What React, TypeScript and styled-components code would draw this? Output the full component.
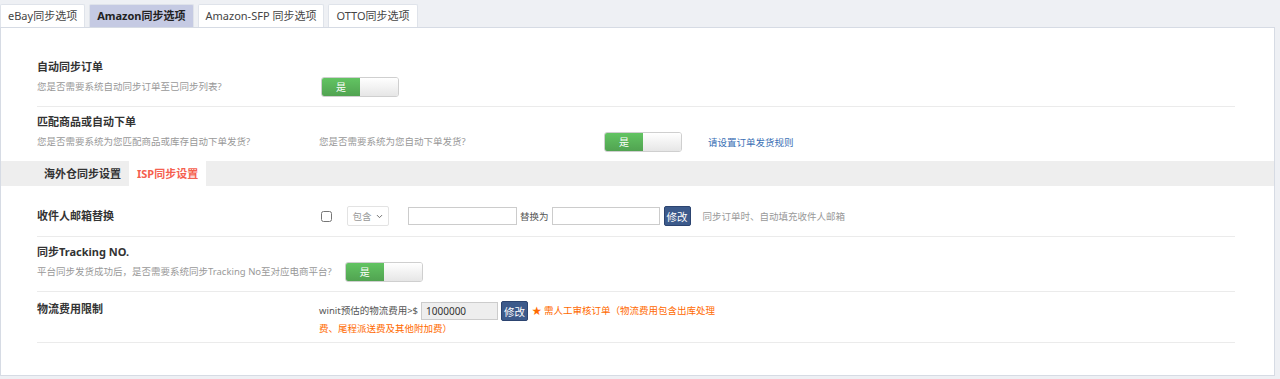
import styled, { createGlobalStyle } from "styled-components";
import { ChevronDown } from "lucide-react";

const GlobalStyle = createGlobalStyle`
  body {
    margin: 0;
    background: #eef0f4;
    font-family: "Noto Sans", "Noto Sans CJK SC", sans-serif;
    font-size: 9.5px;
    color: #333;
  }
`;

const Page = styled.div`
  height: 379px;
  padding-top: 4px;
  box-sizing: border-box;
`;

const TopTabs = styled.div`
  display: flex;
  gap: 4px;
`;

const TopTab = styled.div<{ $active?: boolean }>`
  height: 23px;
  box-sizing: border-box;
  padding: 0 7px;
  line-height: 22px;
  font-size: 11px;
  border: 1px solid #dfe3ea;
  border-bottom: none;
  border-radius: 2px 2px 0 0;
  background: ${(p) => (p.$active ? "#c5cae3" : "#fff")};
  color: ${(p) => (p.$active ? "#222" : "#444")};
  font-weight: ${(p) => (p.$active ? 700 : 400)};
`;

const Panel = styled.div`
  width: 1275px;
  height: 349px;
  box-sizing: border-box;
  background: #fff;
  border: 1px solid #d6dbe4;
  padding-top: 29px;
`;

const Section = styled.div`
  padding: 0 39px 0 36px;
`;

const Row = styled.div<{ $pt: number; $pb: number; $last?: boolean }>`
  padding: ${(p) => p.$pt}px 0 ${(p) => p.$pb}px;
  border-bottom: ${(p) => (p.$last ? "none" : "1px solid #ebebeb")};
`;

const Title = styled.div`
  font-size: 11px;
  font-weight: 700;
  line-height: 20px;
  color: #333;
`;

const Line = styled.div`
  display: flex;
  align-items: center;
  height: 20px;
`;

const Desc = styled.div<{ $w?: number }>`
  color: #999;
  line-height: 20px;
  white-space: nowrap;
  ${(p) => (p.$w ? `width: ${p.$w}px; flex: none;` : "")}
`;

const Switch = styled.div<{ $ml?: number }>`
  display: flex;
  width: 78px;
  height: 20px;
  box-sizing: border-box;
  border: 1px solid #cfcfcf;
  border-radius: 3px;
  overflow: hidden;
  margin-left: ${(p) => p.$ml ?? 0}px;
  flex: none;
`;

const SwitchOn = styled.div`
  width: 38px;
  background: linear-gradient(#62c462, #51a351);
  color: #fff;
  font-size: 10px;
  line-height: 18px;
  text-align: center;
`;

const SwitchOff = styled.div`
  flex: 1;
  background: linear-gradient(#fff, #e6e6e6);
`;

const Link = styled.a`
  margin-left: 26px;
  color: #3a70b5;
  text-decoration: none;
  white-space: nowrap;
`;

const Band = styled.div`
  display: flex;
  height: 25px;
  background: #eeeeee;
  padding-left: 35px;
`;

const SubTab = styled.div<{ $active?: boolean }>`
  padding: 0 8px;
  line-height: 25px;
  font-size: 11px;
  font-weight: 700;
  background: ${(p) => (p.$active ? "#fff" : "transparent")};
  color: ${(p) => (p.$active ? "#f5604f" : "#333")};
`;

const Grid = styled.div<{ $align?: string }>`
  display: grid;
  grid-template-columns: 282px auto;
  align-items: ${(p) => p.$align ?? "center"};
`;

const Label = styled.div<{ $lh: number }>`
  font-size: 11px;
  font-weight: 700;
  line-height: ${(p) => p.$lh}px;
`;

const Controls = styled.div`
  display: flex;
  align-items: center;
  height: 22px;
`;

const Check = styled.input`
  width: 11px;
  height: 11px;
  margin: 0 0 0 2px;
`;

const SelectBox = styled.div`
  margin-left: 15px;
  width: 42px;
  height: 20px;
  box-sizing: border-box;
  border: 1px solid #e3e3e3;
  border-radius: 2px;
  display: flex;
  align-items: center;
  justify-content: center;
  gap: 3px;
  color: #999;
  flex: none;
`;

const TextInput = styled.input<{ $w: number; $ml?: number; $grey?: boolean }>`
  width: ${(p) => p.$w}px;
  height: 18px;
  box-sizing: border-box;
  margin: 0 0 0 ${(p) => p.$ml ?? 0}px;
  padding: 0 4px;
  border: 1px solid #ccc;
  font-family: inherit;
  font-size: 10px;
  color: #333;
  background: ${(p) => (p.$grey ? "#eeeeee" : "#fff")};
  vertical-align: middle;
`;

const Plain = styled.span<{ $mx?: number }>`
  margin: 0 ${(p) => p.$mx ?? 0}px;
  color: #555;
  white-space: nowrap;
`;

const Button = styled.button<{ $ml?: number; $mr?: number }>`
  height: 20px;
  width: 27px;
  padding: 0;
  margin-left: ${(p) => p.$ml ?? 4}px;
  margin-right: ${(p) => p.$mr ?? 0}px;
  border: 1px solid #2c4470;
  border-radius: 2px;
  background: #3c5a8b;
  color: #fff;
  font-family: inherit;
  font-size: 10.5px;
  vertical-align: middle;
`;

const Hint = styled.span`
  margin-left: 12px;
  color: #999;
  white-space: nowrap;
`;

// orange warning text flows directly inside the block and wraps under the input
const CostBlock = styled.div`
  width: 400px;
  line-height: 16px;
  color: #ff6a00;
`;

export default function App() {
  return (
    <Page>
      <GlobalStyle />
      <TopTabs>
        <TopTab>eBay同步选项</TopTab>
        <TopTab $active>Amazon同步选项</TopTab>
        <TopTab>Amazon-SFP 同步选项</TopTab>
        <TopTab>OTTO同步选项</TopTab>
      </TopTabs>
      <Panel>
        <Section>
          <Row $pt={0} $pb={9}>
            <Title>自动同步订单</Title>
            <Line>
              <Desc $w={284}>您是否需要系统自动同步订单至已同步列表?</Desc>
              <Switch>
                <SwitchOn>是</SwitchOn>
                <SwitchOff />
              </Switch>
            </Line>
          </Row>
          <Row $pt={5} $pb={9} $last>
            <Title>匹配商品或自动下单</Title>
            <Line>
              <Desc $w={282}>您是否需要系统为您匹配商品或库存自动下单发货?</Desc>
              <Desc $w={285}>您是否需要系统为您自动下单发货?</Desc>
              <Switch>
                <SwitchOn>是</SwitchOn>
                <SwitchOff />
              </Switch>
              <Link href="#">请设置订单发货规则</Link>
            </Line>
          </Row>
        </Section>
        <Band>
          <SubTab>海外仓同步设置</SubTab>
          <SubTab $active>ISP同步设置</SubTab>
        </Band>
        <Section>
          <Row $pt={19} $pb={9}>
            <Grid>
              <Label $lh={22}>收件人邮箱替换</Label>
              <Controls>
                <Check type="checkbox" />
                <SelectBox>
                  包含
                  <ChevronDown size={9} strokeWidth={2.5} color="#666" />
                </SelectBox>
                <TextInput $w={109} $ml={19} />
                <Plain $mx={3}>替换为</Plain>
                <TextInput $w={108} />
                <Button>修改</Button>
                <Hint>同步订单时、自动填充收件人邮箱</Hint>
              </Controls>
            </Grid>
          </Row>
          <Row $pt={5} $pb={9}>
            <Title>同步Tracking NO.</Title>
            <Line>
              <Desc>平台同步发货成功后，是否需要系统同步Tracking No至对应电商平台?</Desc>
              <Switch $ml={13}>
                <SwitchOn>是</SwitchOn>
                <SwitchOff />
              </Switch>
            </Line>
          </Row>
          <Row $pt={9} $pb={5}>
            <Grid $align="start">
              <Label $lh={16}>物流费用限制</Label>
              <CostBlock>
                <Plain>winit预估的物流费用&gt;$</Plain>
                <TextInput $w={77} $ml={3} $grey defaultValue="1000000" />
                <Button $ml={3} $mr={4}>修改</Button>
                ★ 需人工审核订单（物流费用包含出库处理费、尾程派送费及其他附加费）
              </CostBlock>
            </Grid>
          </Row>
        </Section>
      </Panel>
    </Page>
  );
}
